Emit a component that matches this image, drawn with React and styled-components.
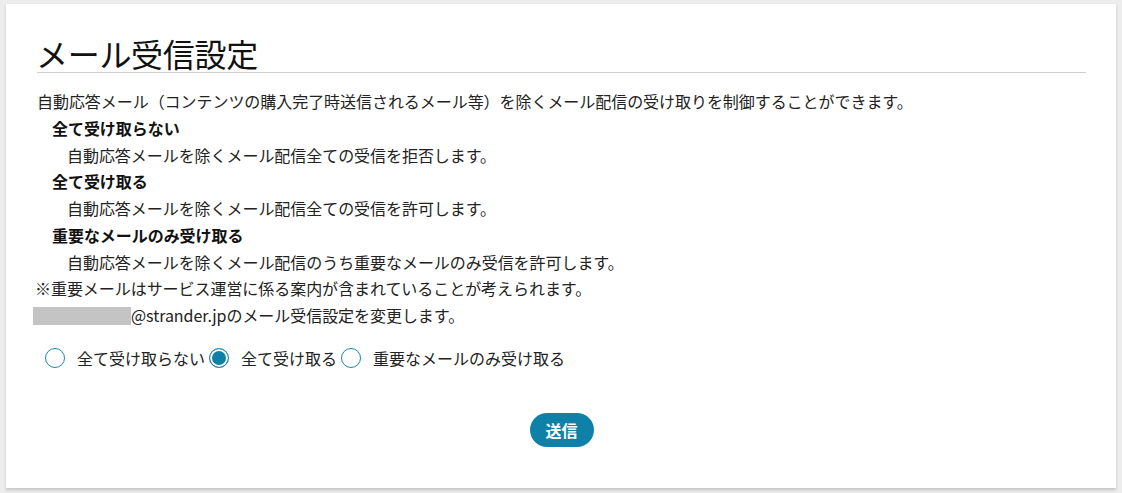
import styled, { createGlobalStyle } from "styled-components";

const GlobalStyle = createGlobalStyle`
    html, body {
        margin: 0;
        padding: 0;
        background: #ededed;
    }
    body {
        font-family: "Noto Sans CJK JP", "Noto Sans", sans-serif;
        color: #222;
    }
`;

const Page = styled.div`
    padding: 4px 6px 5px 6px;
`;

const Card = styled.section`
    background: #fff;
    box-shadow: 0 2px 3px rgba(0, 0, 0, 0.18);
    padding: 31px 30px 40px 31px;
    box-sizing: border-box;
    height: 484px;
`;

const Title = styled.h1`
    margin: 0 0 15px 0;
    font-size: 32px;
    font-weight: 400;
    line-height: 37px;
    color: #111;
    border-bottom: 1px solid #cfcfcf;
    letter-spacing: -0.3px;
    text-indent: -1px;
`;

const Text = styled.div`
    font-size: 16px;
    line-height: 26.75px;
    letter-spacing: -0.05px;
    margin-left: ${(p) => p.$indent || 0}px;
    font-weight: ${(p) => (p.$bold ? 700 : 400)};
    color: ${(p) => (p.$bold ? "#111" : "#222")};
`;

const Masked = styled.span`
    display: inline-block;
    width: 98px;
    height: 18px;
    background: #c4c4c4;
    vertical-align: -3px;
    margin-left: -4px;
`;

const RadioRow = styled.div`
    display: flex;
    align-items: center;
    margin: 17px 0 0 8px;
    font-size: 16px;
`;

const Option = styled.label`
    display: flex;
    align-items: center;
    gap: 12px;
    margin-right: 4px;
    cursor: pointer;
`;

const Circle = styled.span`
    box-sizing: border-box;
    width: 20px;
    height: 20px;
    border-radius: 50%;
    border: 1.5px solid #1d86aa;
    background: ${(p) => (p.$checked ? "#0e7fa6" : "#fff")};
    box-shadow: ${(p) => (p.$checked ? "inset 0 0 0 2px #fff" : "none")};
`;

const Footer = styled.div`
    display: flex;
    justify-content: center;
    margin-top: 43px;
`;

const Button = styled.button`
    background: #0f81a8;
    color: #fff;
    border: none;
    border-radius: 17px;
    width: 64px;
    height: 34px;
    font-family: inherit;
    font-size: 16px;
    font-weight: 700;
    cursor: pointer;
`;

const options = ["全て受け取らない", "全て受け取る", "重要なメールのみ受け取る"];

export default function App() {
    return (
        <Page>
            <GlobalStyle />
            <Card>
                <Title>メール受信設定</Title>
                <Text>自動応答メール（コンテンツの購入完了時送信されるメール等）を除くメール配信の受け取りを制御することができます。</Text>
                <Text $indent={15} $bold>全て受け取らない</Text>
                <Text $indent={30}>自動応答メールを除くメール配信全ての受信を拒否します。</Text>
                <Text $indent={15} $bold>全て受け取る</Text>
                <Text $indent={30}>自動応答メールを除くメール配信全ての受信を許可します。</Text>
                <Text $indent={15} $bold>重要なメールのみ受け取る</Text>
                <Text $indent={30}>自動応答メールを除くメール配信のうち重要なメールのみ受信を許可します。</Text>
                <Text $indent={-2}>※重要メールはサービス運営に係る案内が含まれていることが考えられます。</Text>
                <Text><Masked />@strander.jpのメール受信設定を変更します。</Text>
                <RadioRow>
                    {options.map((label, i) => (
                        <Option key={label}>
                            <Circle $checked={i === 1} />
                            {label}
                        </Option>
                    ))}
                </RadioRow>
                <Footer>
                    <Button>送信</Button>
                </Footer>
            </Card>
        </Page>
    );
}
